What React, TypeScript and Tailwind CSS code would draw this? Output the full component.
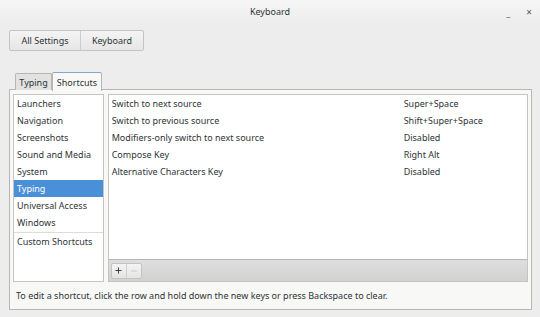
import { Plus, Minus } from 'lucide-react';

const categories = ['Launchers', 'Navigation', 'Screenshots', 'Sound and Media', 'System', 'Typing', 'Universal Access', 'Windows'];

const shortcuts = [
  ['Switch to next source', 'Super+Space'],
  ['Switch to previous source', 'Shift+Super+Space'],
  ['Modifiers-only switch to next source', 'Disabled'],
  ['Compose Key', 'Right Alt'],
  ['Alternative Characters Key', 'Disabled'],
];

export default function App() {
  return (
    <div className="w-[540px] h-[317px] bg-[#ededed] text-[#2e3436] text-[9px] leading-none font-['Noto_Sans',sans-serif] flex flex-col overflow-hidden">

      {/* Title bar */}
      <div className="relative h-[23px] flex items-center justify-center bg-gradient-to-b from-[#f6f6f6] to-[#ededed]">
        <span className="text-[#2e3436]">Keyboard</span>
        <div className="absolute right-[8px] top-[6px] flex items-center gap-[16px] text-[#555]">
          <span className="text-[9px] mt-[2px]">_</span>
          <span className="text-[10px]">×</span>
        </div>
      </div>

      {/* Breadcrumb buttons */}
      <div className="px-[9px] pt-[7px]">
        <div className="inline-flex h-[21px] border border-[#c4c4c2] rounded-[2px] bg-gradient-to-b from-[#f4f4f4] to-[#e6e6e6]">
          <div className="w-[71px] flex items-center justify-center border-r border-[#cdcdcb]">All Settings</div>
          <div className="w-[62px] flex items-center justify-center">Keyboard</div>
        </div>
      </div>

      {/* Tabs */}
      <div className="flex items-end pl-[15px] mt-[20px] h-[19px] relative z-10">
        <div className="h-[17px] w-[37px] flex items-center justify-center border border-b-0 border-[#b6b6b3] bg-[#e2e2e1] rounded-t-[2px]">Typing</div>
        <div className="h-[19px] w-[50px] flex items-center justify-center border border-b-0 border-[#b6b6b3] border-t-[#7fa8d8] bg-[#f8f8f7] rounded-t-[2px] -mb-px">Shortcuts</div>
      </div>

      {/* Notebook */}
      <div className="mx-[9px] w-[523px] h-[221px] -mt-px border border-[#b6b6b3] bg-[#f8f8f7] flex flex-col">
        <div className="flex gap-[4px] px-[3px] pt-[4px] h-[192px]">

          {/* Categories */}
          <div className="w-[91px] h-[188px] border border-[#c4c4c2] bg-white flex flex-col">
            {categories.map(c => (
              <div
                key={c}
                className={`h-[17px] flex items-center pl-[3px] ${c === 'Typing' ? 'bg-[#4a90d9] text-white' : ''}`}
              >
                {c}
              </div>
            ))}
            <div className="border-t border-[#dcdcdb] mt-[1px] h-[18px] flex items-center pl-[3px]">Custom Shortcuts</div>
          </div>

          {/* Shortcut list */}
          <div className="w-[422px] h-[188px] border border-[#c4c4c2] bg-white flex flex-col">
            <div className="flex-1">
              {shortcuts.map(([name, key]) => (
                <div key={name} className="h-[17px] flex items-center">
                  <span className="w-[295px] pl-[3px]">{name}</span>
                  <span>{key}</span>
                </div>
              ))}
            </div>
            <div className="h-[22px] border-t border-[#b6b6b3] bg-gradient-to-b from-[#dedede] to-[#d2d2d2] flex items-center pl-[2px]">
              <div className="flex h-[16px] border border-[#c4c4c2] rounded-[2px] bg-gradient-to-b from-[#f4f4f4] to-[#e4e4e4]">
                <div className="w-[15px] flex items-center justify-center border-r border-[#d0d0d0]">
                  <Plus size={9} strokeWidth={2.4} className="text-[#2e3436]" />
                </div>
                <div className="w-[14px] flex items-center justify-center">
                  <Minus size={8} strokeWidth={1.5} className="text-[#a0a0a0]" />
                </div>
              </div>
            </div>
          </div>
        </div>

        <div className="pl-[6px] pt-[9px]">
          To edit a shortcut, click the row and hold down the new keys or press Backspace to clear.
        </div>
      </div>
    </div>
  );
}
